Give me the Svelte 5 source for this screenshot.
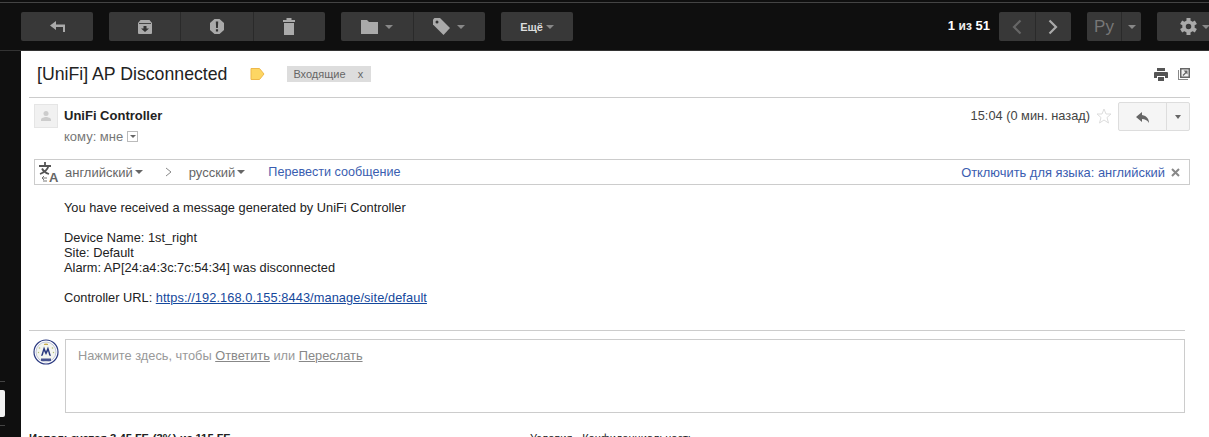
<script>
  const lines = [
    'Device Name: 1st_right',
    'Site: Default',
    'Alarm: AP[24:a4:3c:7c:54:34] was disconnected',
  ];
  const teeth = [0, 60, 120, 180, 240, 300];
</script>

<div class="page">
  <header class="toolbar">
    <div class="btn-group w72">
      <button class="btn">
        <svg width="15" height="11" viewBox="0 0 15 11"><path d="M6 0 0 4.500 6 9V6h7v5h2V3.500H6z" fill="#aaa"/></svg>
      </button>
    </div>
    <div class="btn-group w216">
      <button class="btn">
        <svg width="14" height="14" viewBox="0 0 14 14"><path d="M2.500 0h9L14 3v10a1 1 0 0 1-1 1H1a1 1 0 0 1-1-1V3z" fill="#aaa"/><path d="M1 3.500h12" stroke="#444"/><path d="M5.500 6h3v2.500H11l-4 3.500-4-3.500h2.500z" fill="#333"/></svg>
      </button>
      <button class="btn">
        <svg width="14" height="15" viewBox="0 0 14 15"><path d="M4.500 0h5L14 4v7l-4.500 4h-5L0 11V4z" fill="#aaa"/><path d="M5.800 2.500h2.400l-.3 6.500H6.100zM5.900 10.300h2.200v2.200H5.900z" fill="#333"/></svg>
      </button>
      <button class="btn">
        <svg width="12" height="17" viewBox="0 0 12 17"><path d="M0 2h3.500V0h5v2H12v2H0zM1 5h10v12H1z" fill="#aaa"/></svg>
      </button>
    </div>
    <div class="btn-group w144">
      <button class="btn">
        <svg width="17" height="14" viewBox="0 0 17 14"><path d="M0 0h6l2 2h9v12H0z" fill="#aaa"/></svg>
        <i class="caret"></i>
      </button>
      <button class="btn">
        <svg width="17" height="17" viewBox="0 0 17 17"><path d="M0 1.500 1.500 0H7l10 10-6.500 7L0 6.500z" fill="#aaa"/><circle cx="4" cy="4" r="1.500" fill="#333"/></svg>
        <i class="caret"></i>
      </button>
    </div>
    <div class="btn-group w72">
      <button class="btn more">Ещё <i class="caret"></i></button>
    </div>
    <div class="pager">
      <span class="count">1 <span class="thin">из</span> 51</span>
      <div class="btn-group w72">
        <button class="btn">
          <svg width="10" height="16" viewBox="0 0 10 16"><path d="M8.500 1.500 2 8l6.500 6.500" fill="none" stroke="#666" stroke-width="2.200"/></svg>
        </button>
        <button class="btn">
          <svg width="10" height="16" viewBox="0 0 10 16"><path d="M1.500 1.500 8 8l-6.500 6.500" fill="none" stroke="#aaa" stroke-width="2.200"/></svg>
        </button>
      </div>
      <div class="btn-group lang">
        <button class="btn ru">Ру</button>
        <button class="btn narrow"><i class="caret"></i></button>
      </div>
      <div class="btn-group gear">
        <button class="btn">
          <svg width="17" height="17" viewBox="0 0 17 17">
            {#each teeth as angle}
              <rect x="6.500" y="0" width="4" height="4" fill="#aaa" transform="rotate({angle} 8.500 8.500)" />
            {/each}
            <circle cx="8.500" cy="8.500" r="4.500" fill="none" stroke="#aaa" stroke-width="3.500"/>
          </svg>
          <i class="caret"></i>
        </button>
      </div>
    </div>
  </header>

  <div class="columns">
    <aside class="rail">
      <div class="rail-line"></div>
      <div class="rail-box"></div>
      <div class="rail-line"></div>
    </aside>

    <main class="content">
      <div class="subject-row">
        <h1>[UniFi] AP Disconnected</h1>
        <svg class="flag" width="15" height="12" viewBox="0 0 15 12"><path d="M1 .500h8.500L14 6l-4.500 5.500H1z" fill="#fdd663" stroke="#eeb84a"/></svg>
        <span class="label">Входящие <span class="x">x</span></span>
        <div class="subject-icons">
          <svg width="14" height="13" viewBox="0 0 14 13"><path d="M3 0h8v3H3zM1 4h12a1 1 0 0 1 1 1v5h-3V8H3v2H0V5a1 1 0 0 1 1-1zM4 9h6v4H4z" fill="#555"/></svg>
          <svg width="12" height="12" viewBox="0 0 12 12"><path d="M2 0h10v10H2z" fill="#666"/><path d="M0 2v10h10v-1H1V2z" fill="#888"/><path d="M3.500 1.500h7v7h-7z" fill="#f2f2f2"/><path d="M5.500 2.500h4v4L8.200 5.200 5.400 8 4.500 7.100 7.300 4.300z" fill="#666"/></svg>
        </div>
      </div>

      <div class="sender">
        <div class="avatar">
          <svg width="12" height="12" viewBox="0 0 12 12"><circle cx="6" cy="3.500" r="2.500" fill="#ccc"/><path d="M1 11V9.500C1 8 4 7 6 7s5 1 5 2.500V11z" fill="#ccc"/></svg>
        </div>
        <div class="who">
          <div class="name">UniFi Controller</div>
          <div class="to">кому: мне <span class="tiny-drop"><i></i></span></div>
        </div>
        <div class="meta">
          <span class="time">15:04 (0 мин. назад)</span>
          <svg width="16" height="16" viewBox="0 0 16 16"><path d="m8 1 2 5h5l-4 3.500 1.500 5.500L8 12l-4.500 3L5 9.500 1 6h5z" fill="none" stroke="#ddd"/></svg>
          <div class="reply-split">
            <button class="reply-main">
              <svg width="14" height="12" viewBox="0 0 14 12"><path d="M6 0 0 5l6 5V7c3 0 5 1 7 4 0-4-2-7-7-8z" fill="#666"/></svg>
            </button>
            <button class="reply-more"><i></i></button>
          </div>
        </div>
      </div>

      <div class="translate">
        <svg class="tr-icon" width="21" height="22" viewBox="0 0 21 22">
          <path d="M0 5h12M6 1v4M9.500 5C8.500 8.500 5 11.500 1 13M3 7.500c1 2 4 4.500 7 5.500" fill="none" stroke="#555" stroke-width="1.800"/>
          <path d="M8 17H3.500M5 15l-2 2 2 2M4 20h4" fill="none" stroke="#777"/>
          <text x="10" y="21" class="tr-a">A</text>
        </svg>
        <span class="lang-name first">английский</span><i class="tr-caret"></i>
        <svg class="chev" width="7" height="10" viewBox="0 0 7 10"><path d="m1 1 5 4-5 4" fill="none" stroke="#888"/></svg>
        <span class="lang-name">русский</span><i class="tr-caret"></i>
        <a class="tr-link go" href="#top">Перевести сообщение</a>
        <a class="tr-link off" href="#top">Отключить для языка: английский</a>
        <svg class="tr-close" width="9" height="9" viewBox="0 0 9 9"><path d="m1 1 7 7M8 1 1 8" stroke="#888" stroke-width="2"/></svg>
      </div>

      <div class="body">
        <p>You have received a message generated by UniFi Controller</p>
        <p>
          {#each lines as line}
            {line}<br />
          {/each}
        </p>
        <p>Controller URL: <a href="#top">https://192.168.0.155:8443/manage/site/default</a></p>
      </div>

      <div class="reply-area">
        <svg class="me" width="26" height="26" viewBox="0 0 26 26">
          <circle cx="13" cy="13" r="12" fill="#fff" stroke="#2b3a80" stroke-width="1.200"/>
          <circle cx="13" cy="13" r="10" fill="#f4f5f0" stroke="#9aa3c4" stroke-width=".6"/>
          <path d="M8 17 11 7.500l2 5 2-5L18 17l-1.800-.4L15 12l-2 4-2-4-1.200 4.600z" fill="#2b3a80"/>
          <path d="M8 19.500h10V22H8z" fill="#46528f"/>
          <path d="M11 6h4v-1.500l-1 .7-1-1.200-1 1.200-1-.7z" fill="#c9ab4a"/>
          <circle cx="6.500" cy="9" r=".8" fill="#b5c07a"/>
          <circle cx="19.500" cy="9" r=".8" fill="#b5c07a"/>
          <circle cx="5.500" cy="13.500" r=".7" fill="#b5c07a"/>
          <circle cx="20.500" cy="13.500" r=".7" fill="#b5c07a"/>
        </svg>
        <div class="reply-box">
          Нажмите здесь, чтобы <u>Ответить</u> или <u>Переслать</u>
        </div>
      </div>

      <footer class="foot">
        <span class="used">Используется 3,45 ГБ (3%) из 115 ГБ</span>
        <span class="terms">Условия - Конфиденциальность</span>
      </footer>
    </main>
  </div>
</div>

<style>
  :global(body) {
    margin: 0;
    background: #0f0f0f;
  }
  .page {
    width: 1209px;
    height: 437px;
    overflow: hidden;
    font-family: "Liberation Sans", Arial, sans-serif;
    font-size: 12px;
    color: #222;
    display: flex;
    flex-direction: column;
  }
  .toolbar {
    margin-top: 2px;
    border-top: 1px solid #444;
    background: #0f0f0f;
    display: flex;
    gap: 16px;
    padding: 9px 0 0 21px;
    box-sizing: border-box;
    height: 49px;
    flex-shrink: 0;
    border-bottom: 1px solid #333;
  }
  .btn-group {
    display: flex;
    height: 29px;
    background: #383838;
    border-radius: 2px;
    flex-shrink: 0;
  }
  .w72 { width: 72px; }
  .w216 { width: 216px; }
  .w144 { width: 144px; }
  .btn {
    flex: 1;
    border: 0;
    background: none;
    padding: 0;
    display: flex;
    align-items: center;
    justify-content: center;
    gap: 7px;
    border-left: 1px solid #2a2a2a;
    font-family: inherit;
  }
  .btn:first-child {
    border-left: 0;
  }
  .caret {
    width: 0;
    height: 0;
    border-left: 4px solid transparent;
    border-right: 4px solid transparent;
    border-top: 4px solid #888;
  }
  .more {
    color: #ddd;
    font-size: 11px;
    font-weight: bold;
    gap: 3px;
  }
  .pager {
    margin-left: auto;
    display: flex;
    gap: 16px;
    align-items: flex-start;
    margin-right: -8px;
  }
  .count {
    color: #fff;
    font-weight: bold;
    font-size: 13px;
    line-height: 27px;
    margin-right: -7px;
  }
  .thin {
    font-size: 12px;
    color: #eee;
  }
  .lang {
    width: 54px;
  }
  .ru {
    flex: none;
    width: 34px;
    color: #777;
    font-size: 17px;
  }
  .narrow {
    flex: 1;
  }
  .gear {
    width: 60px;
  }
  .gear .btn {
    gap: 5px;
    justify-content: flex-end;
    padding-right: 7px;
  }
  .columns {
    flex: 1;
    display: flex;
    min-height: 0;
  }
  .rail {
    width: 21px;
    flex-shrink: 0;
    padding-top: 330px;
    box-sizing: border-box;
  }
  .rail-line {
    width: 5px;
    height: 1px;
    background: #444;
  }
  .rail-box {
    width: 5px;
    height: 27px;
    margin: 8px 0;
    background: #f2f2f2;
    border-radius: 0 2px 2px 0;
  }
  .content {
    flex: 1;
    background: #fff;
    min-width: 0;
    padding: 0 19px 0 8px;
  }
  .subject-row {
    height: 47px;
    box-sizing: border-box;
    display: flex;
    align-items: center;
    border-bottom: 1px solid #ccc;
    padding: 0 0 0 8px;
  }
  h1 {
    margin: 0;
    font-size: 17.700px;
    font-weight: normal;
    color: #222;
  }
  .flag {
    margin-left: 23px;
  }
  .label {
    margin-left: 22px;
    width: 84px;
    height: 16px;
    line-height: 17px;
    box-sizing: border-box;
    padding-left: 6px;
    background: #ddd;
    color: #666;
    font-size: 11px;
  }
  .x {
    margin-left: 9px;
  }
  .subject-icons {
    margin-left: auto;
    display: flex;
    gap: 10px;
    align-items: center;
  }
  .sender {
    display: flex;
    padding: 6px 0 0 5px;
    height: 55px;
    box-sizing: border-box;
    align-items: flex-start;
  }
  .avatar {
    width: 24px;
    height: 24px;
    background: #f1f1f1;
    border: 1px solid #e5e5e5;
    box-sizing: border-box;
    display: flex;
    align-items: center;
    justify-content: center;
  }
  .who {
    margin-left: 6px;
  }
  .name {
    font-weight: bold;
    font-size: 13px;
    line-height: 15px;
    margin-top: 4px;
  }
  .to {
    color: #777;
    font-size: 13px;
    line-height: 15px;
    margin-top: 6px;
    display: flex;
    align-items: center;
    gap: 5px;
  }
  .tiny-drop {
    width: 11px;
    height: 11px;
    border: 1px solid #bbb;
    box-sizing: border-box;
    display: flex;
    align-items: center;
    justify-content: center;
    margin-left: -1px;
  }
  .tiny-drop i {
    border-left: 3px solid transparent;
    border-right: 3px solid transparent;
    border-top: 3px solid #666;
  }
  .meta {
    margin-left: auto;
    display: flex;
    align-items: flex-start;
    gap: 6px;
    margin-top: -2px;
  }
  .time {
    color: #444;
    font-size: 12.800px;
    line-height: 15px;
    margin-top: 6px;
  }
  .meta svg:first-of-type {
    margin-top: 6px;
  }
  .reply-split {
    display: flex;
    height: 29px;
    width: 72px;
    border: 1px solid #ddd;
    border-radius: 2px;
    box-sizing: border-box;
    background: #f5f5f5;
  }
  .reply-main {
    width: 48px;
    border: 0;
    border-right: 1px solid #ddd;
    background: none;
    padding: 0;
  }
  .reply-more {
    flex: 1;
    border: 0;
    background: none;
    padding: 0;
    display: flex;
    align-items: center;
    justify-content: center;
  }
  .reply-more i {
    border-left: 3.500px solid transparent;
    border-right: 3.500px solid transparent;
    border-top: 4px solid #666;
  }
  .translate {
    margin: 6px 0 0 5px;
    height: 26px;
    border: 1px solid #ccc;
    box-sizing: border-box;
    display: flex;
    align-items: center;
    color: #666;
    font-size: 13px;
    padding: 0 9px 0 4px;
  }
  .tr-icon {
    flex-shrink: 0;
    overflow: visible;
  }
  .tr-a {
    font-size: 13px;
    font-weight: bold;
    fill: #666;
  }
  .lang-name.first {
    margin-left: 5px;
  }
  .tr-caret {
    margin-left: 2px;
    border-left: 4px solid transparent;
    border-right: 4px solid transparent;
    border-top: 4px solid #666;
  }
  .chev {
    margin: 0 17px 0 22px;
  }
  .tr-link {
    color: #3a5db0;
    text-decoration: none;
    font-size: 12.900px;
  }
  .go {
    margin-left: 23px;
    font-size: 12.600px;
  }
  .off {
    margin-left: auto;
  }
  .tr-close {
    margin-left: 6px;
  }
  .body {
    margin: 15px 0 0 35px;
    font-size: 12.800px;
    line-height: 15px;
    color: #222;
  }
  .body p {
    margin: 0 0 15px;
  }
  .body a {
    color: #15489c;
    letter-spacing: 0.08px;
  }
  .reply-area {
    margin: 25px 5px 0 0;
    border-top: 1px solid #ccc;
    padding: 8px 0 0 5px;
    display: flex;
    gap: 6px;
    align-items: flex-start;
  }
  .me {
    margin-left: -1px;
    flex-shrink: 0;
  }
  .reply-box {
    flex: 1;
    height: 74px;
    border: 1px solid #ccc;
    box-sizing: border-box;
    padding: 8px 12px;
    color: #999;
    font-size: 12.800px;
    line-height: 15px;
  }
  .reply-box u {
    color: #888;
  }
  .foot {
    margin-top: 19px;
    display: flex;
    font-size: 11px;
    line-height: 13px;
    color: #222;
  }
  .used {
    font-weight: bold;
    font-size: 11.300px;
    width: 501px;
    flex-shrink: 0;
    white-space: nowrap;
  }
</style>
